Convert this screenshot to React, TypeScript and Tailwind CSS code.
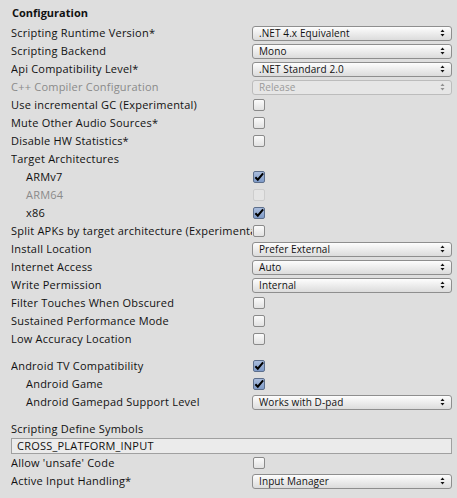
import React from 'react';

type Row =
  | { kind: 'select'; label: string; value: string; disabled?: boolean; indent?: boolean }
  | { kind: 'check'; label: string; checked?: boolean; disabled?: boolean; indent?: boolean }
  | { kind: 'label'; label: string }
  | { kind: 'gap' };

const rows: Row[] = [
  { kind: 'select', label: 'Scripting Runtime Version*', value: '.NET 4.x Equivalent' },
  { kind: 'select', label: 'Scripting Backend', value: 'Mono' },
  { kind: 'select', label: 'Api Compatibility Level*', value: '.NET Standard 2.0' },
  { kind: 'select', label: 'C++ Compiler Configuration', value: 'Release', disabled: true },
  { kind: 'check', label: 'Use incremental GC (Experimental)' },
  { kind: 'check', label: 'Mute Other Audio Sources*' },
  { kind: 'check', label: 'Disable HW Statistics*' },
  { kind: 'label', label: 'Target Architectures' },
  { kind: 'check', label: 'ARMv7', checked: true, indent: true },
  { kind: 'check', label: 'ARM64', disabled: true, indent: true },
  { kind: 'check', label: 'x86', checked: true, indent: true },
  { kind: 'check', label: 'Split APKs by target architecture (Experimental)' },
  { kind: 'select', label: 'Install Location', value: 'Prefer External' },
  { kind: 'select', label: 'Internet Access', value: 'Auto' },
  { kind: 'select', label: 'Write Permission', value: 'Internal' },
  { kind: 'check', label: 'Filter Touches When Obscured' },
  { kind: 'check', label: 'Sustained Performance Mode' },
  { kind: 'check', label: 'Low Accuracy Location' },
  { kind: 'gap' },
  { kind: 'check', label: 'Android TV Compatibility', checked: true },
  { kind: 'check', label: 'Android Game', checked: true, indent: true },
  { kind: 'select', label: 'Android Gamepad Support Level', value: 'Works with D-pad', indent: true },
  { kind: 'gap' },
];

const Arrows = ({ dim }: { dim?: boolean }) => (
  <svg width="5" height="8" viewBox="0 0 5 8" className={dim ? 'opacity-40' : ''}>
    <path d="M0.5 3 L2.5 0.5 L4.5 3 Z" fill="#111" />
    <path d="M0.5 5 L2.5 7.5 L4.5 5 Z" fill="#111" />
  </svg>
);

const Select = ({ value, disabled }: { value: string; disabled?: boolean }) => (
  <div
    className={`w-[200px] h-[15px] flex items-center justify-between pl-[6px] pr-[6px] rounded-[3px] border text-[10px] tracking-[0.1px] leading-none ${
      disabled
        ? 'border-[#bcbcbc] bg-[#e6e6e6] text-[#9a9a9a]'
        : 'border-[#8e8e8e] bg-gradient-to-b from-[#fdfdfd] to-[#dcdcdc] text-[#111]'
    }`}
  >
    <span>{value}</span>
    <Arrows dim={disabled} />
  </div>
);

const Check = ({ checked, disabled }: { checked?: boolean; disabled?: boolean }) => (
  <div
    className={`w-[12px] h-[12px] ml-[1px] rounded-[2px] border flex items-center justify-center ${
      checked
        ? 'border-[#5d6f8c] bg-gradient-to-b from-[#a9bcdc] to-[#7f9bc8]'
        : disabled
        ? 'border-[#cdcdcd] bg-[#e4e4e4]'
        : 'border-[#8a8a8a] bg-gradient-to-b from-[#fbfbfb] to-[#e2e2e2]'
    }`}
  >
    {checked && (
      <svg width="11" height="10" viewBox="0 0 11 10">
        <path d="M1.5 5.2 L4.2 8 L10 1" fill="none" stroke="#000" strokeWidth="2.2" />
      </svg>
    )}
  </div>
);

const Label = ({ text, disabled, indent }: { text: string; disabled?: boolean; indent?: boolean }) => (
  <div
    className={`w-[241px] shrink-0 overflow-hidden whitespace-nowrap ${indent ? 'pl-[15px]' : ''} ${
      disabled ? 'text-[#8a8a8a]' : 'text-[#111]'
    }`}
  >
    {text}
  </div>
);

export default function App() {
  return (
    <div
      className="w-[457px] h-[498px] bg-[#dedede] text-[11px] tracking-[0.22px] pl-[11px] pt-[4px]"
      style={{ fontFamily: '"Open Sans", "DejaVu Sans", sans-serif' }}
    >
      <div className="h-[18px] flex items-center font-bold pl-[1px] tracking-normal text-[#111]">Configuration</div>
      <div className="h-[2px]" />
      {rows.map((r, i) => {
        if (r.kind === 'gap') return <div key={i} className="h-[9px]" />;
        return (
          <div key={i} className="h-[18px] flex items-center">
            <Label
              text={r.label}
              disabled={'disabled' in r ? r.disabled : false}
              indent={'indent' in r ? r.indent : false}
            />
            {r.kind === 'select' && <Select value={r.value} disabled={r.disabled} />}
            {r.kind === 'check' && <Check checked={r.checked} disabled={r.disabled} />}
          </div>
        );
      })}
      <div className="h-[18px] flex items-center text-[#111]">Scripting Define Symbols</div>
      <div className="w-[441px] h-[16px] border border-[#a0a0a0] bg-[#ebebeb] flex items-center pl-[5px] text-[#111]">
        CROSS_PLATFORM_INPUT
      </div>
      <div className="h-[18px] flex items-center">
        <Label text="Allow 'unsafe' Code" />
        <Check />
      </div>
      <div className="h-[18px] flex items-center">
        <Label text="Active Input Handling*" />
        <Select value="Input Manager" />
      </div>
    </div>
  );
}
